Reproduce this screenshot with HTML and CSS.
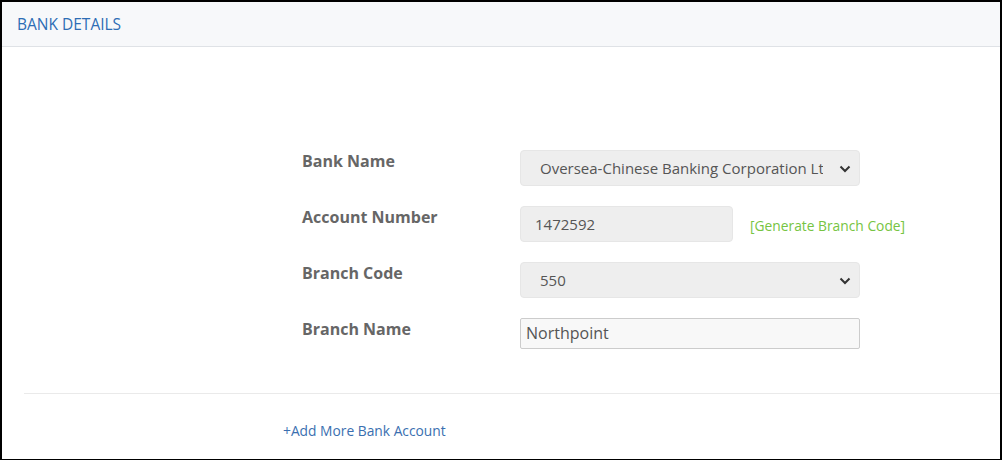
FILE: index.html
```html
<!DOCTYPE html>
<html lang="en">

<head>
  <meta charset="UTF-8" />
  <title>Bank Details</title>
  <link rel="stylesheet" href="styles.css">
</head>

<body>
  <!-- 패널 -->
  <section class="panel">
    <header class="panel-head">BANK DETAILS</header>

    <div class="panel-body">
      <div class="form">
        <!-- 은행명 -->
        <div class="row">
          <label class="label">Bank Name</label>
          <div class="select wide">
            <span class="select-text">Oversea-Chinese Banking Corporation Ltd</span>
            <svg class="chev" width="12" height="8" viewBox="0 0 12 8">
              <path d="M1.5 1.5 L6 6 L10.5 1.5" fill="none" stroke="#333" stroke-width="2" />
            </svg>
          </div>
        </div>

        <!-- 계좌번호 -->
        <div class="row">
          <label class="label">Account Number</label>
          <div class="field">
            <div class="input readonly">1472592</div>
            <a href="#" class="gen">[Generate Branch Code]</a>
          </div>
        </div>

        <!-- 지점코드 -->
        <div class="row">
          <label class="label">Branch Code</label>
          <div class="select wide">
            <span class="select-text">550</span>
            <svg class="chev" width="12" height="8" viewBox="0 0 12 8">
              <path d="M1.5 1.5 L6 6 L10.5 1.5" fill="none" stroke="#333" stroke-width="2" />
            </svg>
          </div>
        </div>

        <!-- 지점명 -->
        <div class="row">
          <label class="label">Branch Name</label>
          <div class="input text">Northpoint</div>
        </div>
      </div>

      <hr class="line">

      <a href="#" class="add">+Add More Bank Account</a>
    </div>
  </section>
</body>

</html>
```

FILE: styles.css
```css
/* 초기화 */
html,
body {
  margin: 0;
  padding: 0;
}

body {
  font-family: "Open Sans", "Liberation Sans", sans-serif;
  background: #fff;
}

/* 패널 */
.panel {
  box-sizing: border-box;
  width: 1002px;
  height: 460px;
  border: 2px solid #000;
  border-bottom-width: 1px;
  background: #fff;
  overflow: hidden;
}

.panel-head {
  height: 44px;
  line-height: 44px;
  padding-left: 15px;
  background-color: #f7f8fa;
  border-bottom: 1px solid #dfe2e6;
  color: #2d6db5;
  font-size: 15.5px;
}

.panel-body {
  padding: 103px 0 0 22px;
}

/* 폼 */
.form {
  display: flex;
  flex-direction: column;
  gap: 20px;
  padding-left: 278px;
}

.row {
  display: flex;
  align-items: flex-start;
}

.label {
  width: 218px;
  color: #666;
  font-size: 16px;
  font-weight: bold;
  line-height: 22px;
}

/* 셀렉트 */
.select {
  position: relative;
  box-sizing: border-box;
  height: 36px;
  padding: 0 36px 0 19px;
  background: #eee;
  border: 1px solid #e6e6e6;
  border-radius: 4px;
  display: flex;
  align-items: center;
  overflow: hidden;
}

.wide {
  width: 340px;
}

.select-text {
  color: #555;
  font-size: 15px;
  white-space: nowrap;
  overflow: hidden;
}

.chev {
  position: absolute;
  right: 8px;
  top: 14px;
}

/* 입력 */
.field {
  display: flex;
  align-items: center;
  gap: 17px;
}

.input {
  box-sizing: border-box;
  color: #555;
}

.readonly {
  width: 213px;
  height: 36px;
  line-height: 34px;
  padding-left: 14px;
  font-size: 15px;
  background: #eee;
  border: 1px solid #e6e6e6;
  border-radius: 4px;
}

.text {
  width: 340px;
  height: 31px;
  line-height: 29px;
  padding-left: 5px;
  font-size: 16px;
  background: #f8f8f8;
  border: 1px solid #ccc;
  border-radius: 2px;
}

.gen {
  margin-top: 2px;
  color: #76c442;
  font-size: 13.8px;
  text-decoration: none;
}

/* 구분선 */
.line {
  margin: 44px 0 0;
  border: 0;
  border-top: 1px solid #eaeaea;
}

.add {
  display: inline-block;
  margin: 27px 0 0 259px;
  color: #3a6fb0;
  font-size: 13.8px;
  text-decoration: none;
}
```
